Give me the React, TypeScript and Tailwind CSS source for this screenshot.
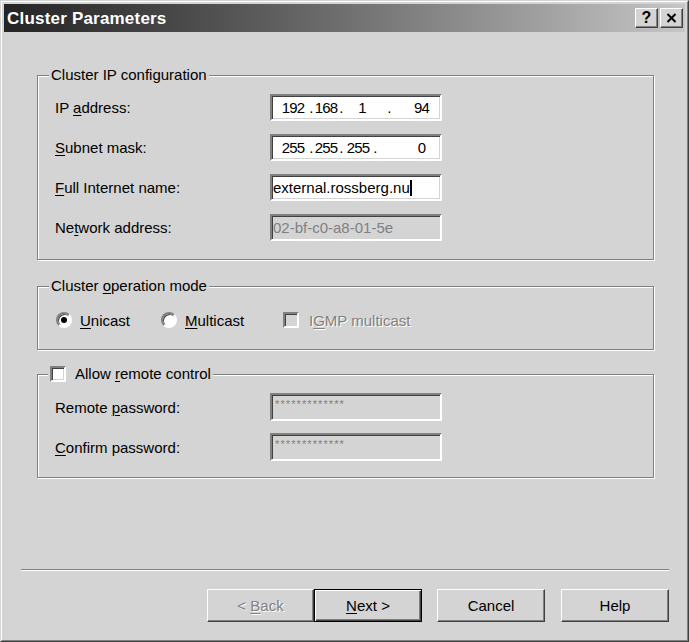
import type { ReactNode } from "react";

function U({ children }: { children: ReactNode }) {
  return <span className="underline decoration-1 underline-offset-[2px]">{children}</span>;
}

const disabledText = "text-[#808080] [text-shadow:1px_1px_0_#ffffff]";

function GroupBox({
  legend,
  legendLeft = "left-[11px]",
  className,
  children,
}: {
  legend: ReactNode;
  legendLeft?: string;
  className?: string;
  children: ReactNode;
}) {
  return (
    <div
      className={`relative border border-[#808080] shadow-[inset_1px_1px_0_#ffffff,1px_1px_0_#ffffff] ${className ?? ""}`}
    >
      <div className={`absolute -top-[10px] ${legendLeft} h-[17px] px-[2px] bg-[#d4d4d4] flex items-center`}>
        {legend}
      </div>
      {children}
    </div>
  );
}

function TextBox({
  children,
  disabled,
  h = "h-[27px]",
  className,
}: {
  children?: ReactNode;
  disabled?: boolean;
  h?: string;
  className?: string;
}) {
  return (
    <div
      className={`${h} w-[172px] shrink-0 border-2 border-t-[#808080] border-l-[#808080] border-b-white border-r-white shadow-[inset_1px_1px_0_#404040,inset_-1px_-1px_0_#d4d4d4] flex ${
        disabled ? "bg-[#d4d4d4]" : "bg-white"
      } ${className ?? ""}`}
    >
      {children}
    </div>
  );
}

function FieldRow({ label, children }: { label: ReactNode; children: ReactNode }) {
  return (
    <div className="flex items-center">
      <div className="w-[215px] shrink-0">{label}</div>
      {children}
    </div>
  );
}

// the IP control: four centred fields with dots between
function IpBox({ parts, wide }: { parts: [string, string, string, string]; wide?: boolean }) {
  return (
    <TextBox className="items-center tracking-[-0.8px]">
      <div className="w-[6px]" />
      <span className="w-[30px] text-center">{parts[0]}</span>
      <span className="w-[6px] text-center">.</span>
      <span className="w-[24px] text-center">{parts[1]}</span>
      <span className="w-[6px] text-center">.</span>
      <span className={`${wide ? "w-[36px]" : "w-[28px]"} text-center`}>{parts[2]}</span>
      {wide && <div className="w-[6px]" />}
      <span className="w-[6px] text-center">.</span>
      <div className="flex-1" />
      <span className="w-[37px] text-center">{parts[3]}</span>
    </TextBox>
  );
}

function Radio({ checked }: { checked?: boolean }) {
  return (
    <span className="w-4 h-4 shrink-0 rounded-full border-2 border-t-[#808080] border-l-[#808080] border-r-white border-b-white bg-white shadow-[inset_1px_1px_0_#404040] flex items-center justify-center">
      {checked && <span className="w-[6px] h-[6px] rounded-full bg-black" />}
    </span>
  );
}

function CheckBox({ disabled }: { disabled?: boolean }) {
  return (
    <span
      className={`w-4 h-4 shrink-0 border-2 border-t-[#808080] border-l-[#808080] border-r-white border-b-white shadow-[inset_1px_1px_0_#404040,inset_-1px_-1px_0_#d4d4d4] ${
        disabled ? "bg-[#d4d4d4]" : "bg-white"
      }`}
    />
  );
}

function Button({
  children,
  isDefault,
  className,
}: {
  children: ReactNode;
  isDefault?: boolean;
  className?: string;
}) {
  return (
    <div
      className={`h-[33px] shrink-0 flex items-center justify-center ${
        isDefault
          ? "border border-black shadow-[inset_1px_1px_0_#ffffff,inset_-1px_-1px_0_#404040,inset_-2px_-2px_0_#808080]"
          : "border border-t-white border-l-white border-r-[#404040] border-b-[#404040] shadow-[inset_-1px_-1px_0_#808080]"
      } ${className ?? ""}`}
    >
      {children}
    </div>
  );
}

function CaptionButton({ children }: { children: ReactNode }) {
  return (
    <div className="w-[23px] h-[20px] bg-[#d4d4d4] border border-t-white border-l-white border-r-[#404040] border-b-[#404040] shadow-[inset_-1px_-1px_0_#808080] flex items-center justify-center">
      {children}
    </div>
  );
}

export default function App() {
  return (
    <div className="w-[689px] h-[642px] bg-[#d4d4d4] font-['Liberation_Sans',Arial,sans-serif] text-[15px] leading-[17px] text-black select-none">
      <div className="h-full flex flex-col border border-t-[#d4d4d4] border-l-[#d4d4d4] border-r-[#404040] border-b-[#404040]">
        <div className="flex-1 flex flex-col border border-t-white border-l-white border-r-[#808080] border-b-[#808080] p-[2px]">
          {/* caption */}
          <div className="h-[28px] shrink-0 flex items-center pl-[3px] pr-[2px] bg-gradient-to-r from-[#242424] to-[#c6c6c6]">
            <span className="flex-1 text-white font-bold text-[17px] tracking-[0.2px]">Cluster Parameters</span>
            <div className="flex gap-[2px]">
              <CaptionButton>
                <span className="font-bold text-[16px] leading-none">?</span>
              </CaptionButton>
              <CaptionButton>
                <svg width="11" height="10" viewBox="0 0 11 10">
                  <path d="M1.5 1 L9.5 9 M9.5 1 L1.5 9" stroke="#000" strokeWidth="2" />
                </svg>
              </CaptionButton>
            </div>
          </div>

          <div className="flex-1 flex flex-col">
            <div className="flex flex-col pt-[43px] pl-[33px] pr-[31px]">
              <GroupBox legend={<span>Cluster IP configuration</span>} className="pt-[18px] pb-[18px] pl-[17px]">
                <div className="flex flex-col gap-[13px]">
                  <FieldRow label={<span>IP <U>a</U>ddress:</span>}>
                    <IpBox parts={["192", "168", "1", "94"]} wide />
                  </FieldRow>
                  <FieldRow label={<span><U>S</U>ubnet mask:</span>}>
                    <IpBox parts={["255", "255", "255", "0"]} />
                  </FieldRow>
                  <FieldRow label={<span><U>F</U>ull Internet name:</span>}>
                    <TextBox className="items-center pl-[1px]">
                      <span>external.rossberg.nu</span>
                      <span className="w-[2px] h-[16px] bg-black" />
                    </TextBox>
                  </FieldRow>
                  <FieldRow label={<span>Ne<U>t</U>work address:</span>}>
                    <TextBox disabled className="items-center pl-[1px]">
                      <span className="text-[#808080]">02-bf-c0-a8-01-5e</span>
                    </TextBox>
                  </FieldRow>
                </div>
              </GroupBox>

              <GroupBox
                legend={<span>Cluster <U>o</U>peration mode</span>}
                className="mt-[26px] pt-[25px] pb-[21px] pl-[18px]"
              >
                <div className="flex items-center h-4">
                  <div className="w-[105px] flex items-center gap-[8px]">
                    <Radio checked />
                    <span><U>U</U>nicast</span>
                  </div>
                  <div className="w-[122px] flex items-center gap-[8px]">
                    <Radio />
                    <span><U>M</U>ulticast</span>
                  </div>
                  <div className="flex items-center gap-[10px]">
                    <CheckBox disabled />
                    <span className={disabledText}>I<U>G</U>MP multicast</span>
                  </div>
                </div>
              </GroupBox>

              <GroupBox
                legendLeft="left-[10px]"
                legend={
                  <span className="flex items-center gap-[9px]">
                    <CheckBox />
                    <span>Allow <U>r</U>emote control</span>
                  </span>
                }
                className="mt-[24px] pt-[18px] pb-[16px] pl-[17px]"
              >
                <div className="flex flex-col gap-[12px]">
                  <FieldRow label={<span>Remote <U>p</U>assword:</span>}>
                    <TextBox disabled h="h-[28px]" className="items-start pl-[3px] pt-[4px]">
                      <span className="text-[11px] leading-none tracking-[1.1px] text-[#808080]">*************</span>
                    </TextBox>
                  </FieldRow>
                  <FieldRow label={<span><U>C</U>onfirm password:</span>}>
                    <TextBox disabled h="h-[28px]" className="items-start pl-[3px] pt-[4px]">
                      <span className="text-[11px] leading-none tracking-[1.1px] text-[#808080]">*************</span>
                    </TextBox>
                  </FieldRow>
                </div>
              </GroupBox>
            </div>

            <div className="flex-1" />

            <div className="ml-[17px] mr-[16px] h-[2px] border-t border-t-[#808080] border-b border-b-white" />

            <div className="mt-[18px] mb-[16px] mr-[16px] flex justify-end">
              <Button className="w-[107px]">
                <span className={disabledText}>&lt; <U>B</U>ack</span>
              </Button>
              <Button isDefault className="w-[108px]">
                <span><U>N</U>ext &gt;</span>
              </Button>
              <Button className="w-[108px] ml-[15px]">
                <span>Cancel</span>
              </Button>
              <Button className="w-[108px] ml-[16px]">
                <span>Help</span>
              </Button>
            </div>
          </div>
        </div>
      </div>
    </div>
  );
}
